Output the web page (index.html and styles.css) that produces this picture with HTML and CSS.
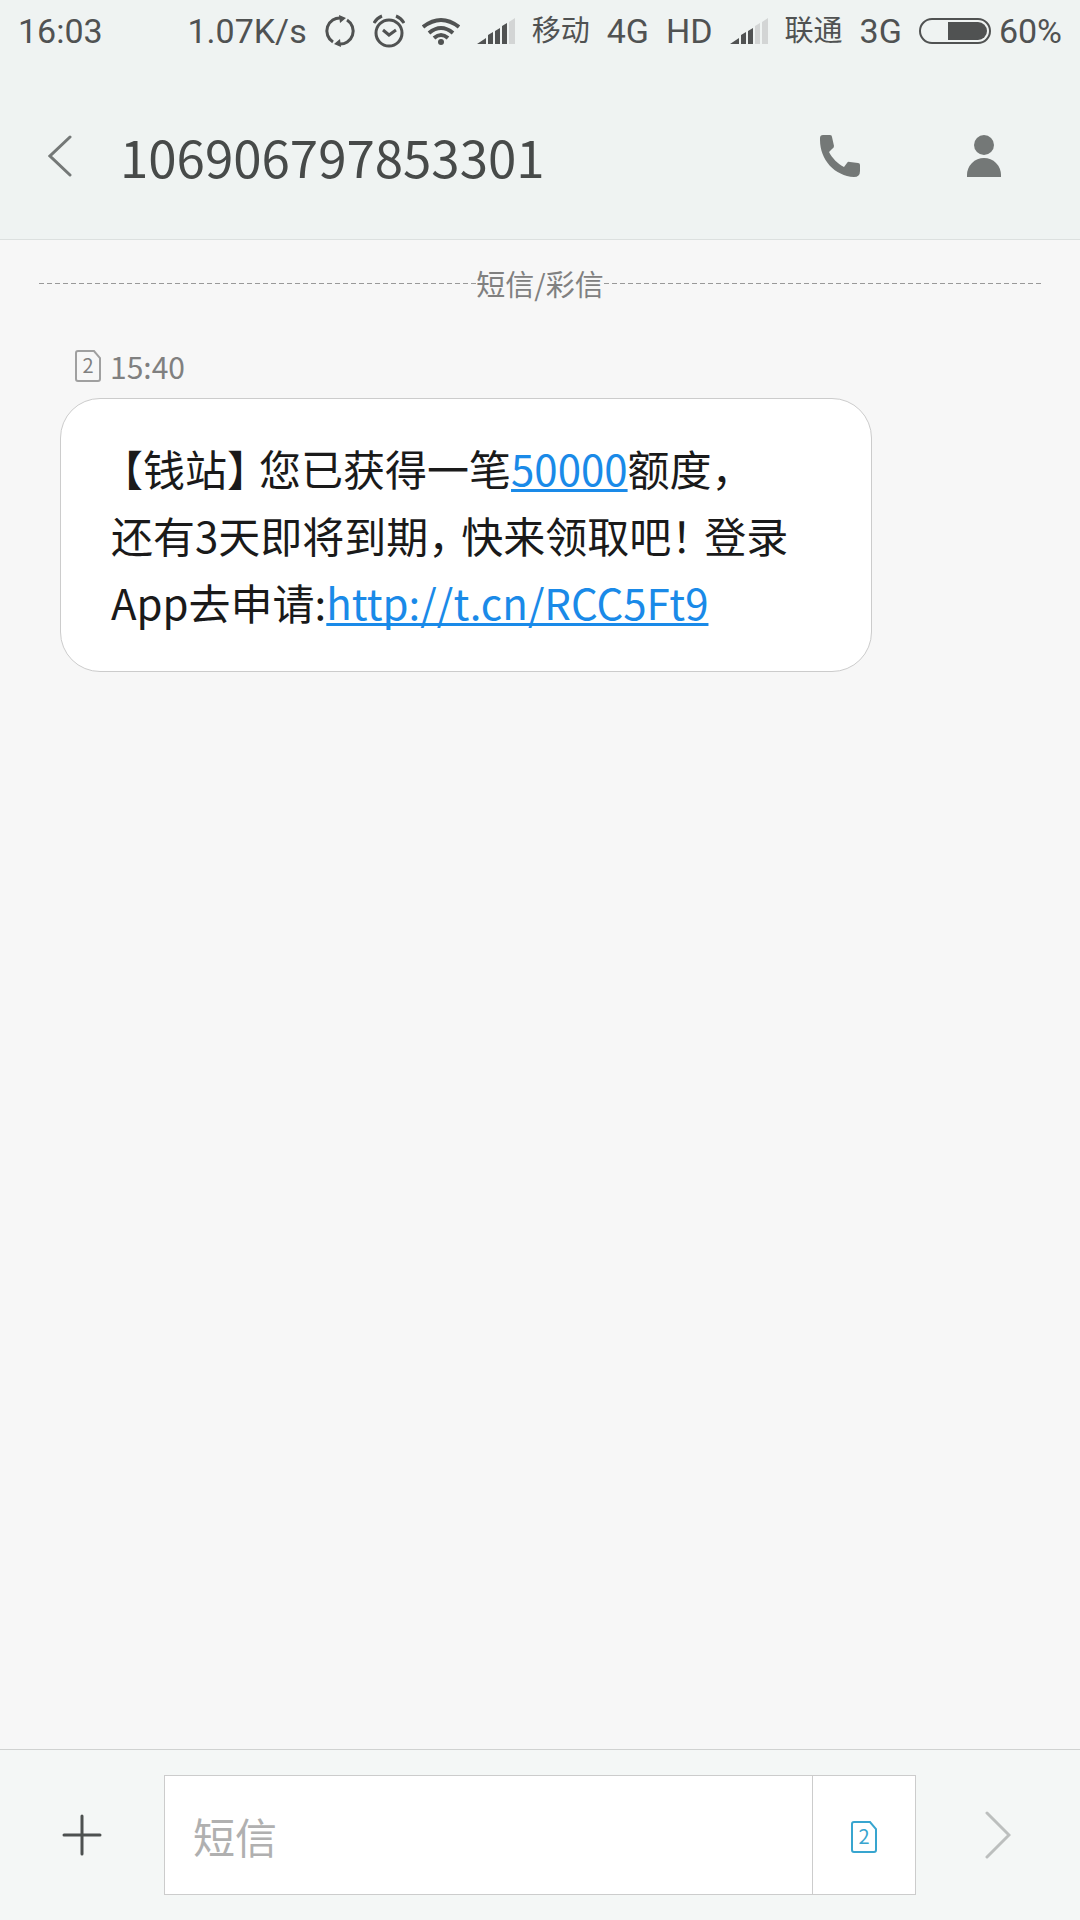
FILE: index.html
```html
<!DOCTYPE html>
<html lang="zh-CN">
<head>
  <meta charset="UTF-8">
  <meta name="viewport" content="width=device-width, initial-scale=1">
  <title>106906797853301</title>
  <link rel="stylesheet" href="styles.css">
</head>
<body>
  <div class="status-bar">
    <span class="clock">16:03</span>
    <span>1.07K/s</span>
    <svg width="32" height="32" viewBox="0 0 32 32" fill="none" stroke="#505252" stroke-width="3">
      <path d="M9 27A13 13 0 0 1 17 3"/>
      <path d="M23 5A13 13 0 0 1 15 29"/>
      <path d="M15 0l7 3-6 5zM17 32l-7-3 6-5z" fill="#505252" stroke="none"/>
    </svg>
    <svg width="32" height="34" viewBox="0 0 32 34" fill="none" stroke="#505252" stroke-width="3">
      <circle cx="16" cy="19" r="13"/>
      <path d="M1 9Q4 4 9 2M31 9Q28 4 23 2"/>
      <path d="M10 16l6 5 7-5"/>
    </svg>
    <svg width="38" height="28" viewBox="0 0 38 28" fill="none" stroke="#505252" stroke-width="4">
      <path d="M1 10Q19-4 37 10"/>
      <path d="M7 16Q19 6 31 16"/>
      <path d="M12 21Q19 15 26 21"/>
      <circle cx="19" cy="25" r="3" fill="#505252" stroke="none"/>
    </svg>
    <svg width="38" height="26" viewBox="0 0 38 26" fill="#505252">
      <path d="M0 26l9-6v6zM11 26v-9l5-3v12zM18 26V13l5-3v16zM25 26V8l5-3v21z"/>
      <path d="M32 26V4l6-4v26z" fill="#d3d5d5"/>
    </svg>
    <span class="carrier">移动</span>
    <span>4G</span>
    <span>HD</span>
    <svg width="38" height="26" viewBox="0 0 38 26" fill="#505252">
      <path d="M0 26l9-6v6zM11 26v-9l5-3v12zM18 26V13l5-3v16z"/>
      <path d="M25 26V8l5-3v21zM32 26V4l6-4v26z" fill="#d3d5d5"/>
    </svg>
    <span class="carrier">联通</span>
    <span>3G</span>
    <span class="battery">
      <svg width="72" height="26" viewBox="0 0 72 26">
        <rect x="1" y="1" width="70" height="24" rx="12" fill="none" stroke="#505252" stroke-width="2"/>
        <path d="M29 4h30a9 9 0 0 1 0 18H29z" fill="#505252"/>
      </svg>
      60%
    </span>
  </div>

  <header class="header">
    <button class="icon-button back" aria-label="返回">
      <svg width="24" height="42" viewBox="0 0 24 42" fill="none" stroke="#747877" stroke-width="3" stroke-linecap="round">
        <path d="M22 2L2 21l20 19"/>
      </svg>
    </button>
    <h1 class="number">106906797853301</h1>
    <button class="icon-button" aria-label="拨打电话">
      <svg width="40" height="42" viewBox="0 0 40 42" fill="#747877">
        <path d="M3 0H10Q12 0 12 2L14 11Q14 13 12 14L9 17C12 23 18 29 24 32L27 28Q28 26 30 27L38 28Q40 28 40 30V36Q40 42 34 42C15 41 0 25 0 5V3Q0 0 3 0Z"/>
      </svg>
    </button>
    <button class="icon-button" aria-label="联系人">
      <svg width="34" height="42" viewBox="0 0 34 42" fill="#747877">
        <circle cx="17" cy="10" r="10"/>
        <path d="M0 42v-2a17 17 0 0 1 34 0v2z"/>
      </svg>
    </button>
  </header>

  <main class="thread">
    <div class="divider">短信/彩信</div>
    <div class="meta">
      <svg class="sim" width="26" height="32" viewBox="0 0 26 32">
        <path d="M3 1H19L25 8V29Q25 31 23 31H3Q1 31 1 29V3Q1 1 3 1Z"/>
        <text x="13" y="23">2</text>
      </svg>
      <time>15:40</time>
    </div>
    <p class="bubble">
      <span class="sender">【钱站】</span>您已获得一笔<a href="#">50000</a>额度，<br>
      还有3天即将到期<span class="mark">，</span>快来领取吧<span class="mark">！</span>登录<br>
      App去申请:<a href="#">http://t.cn/RCC5Ft9</a>
    </p>
  </main>

  <form class="composer">
    <button type="button" class="icon-button" aria-label="添加">
      <svg width="40" height="42" viewBox="0 0 40 42" fill="none" stroke="#4d5150" stroke-width="3" stroke-linecap="round">
        <path d="M2 21h36M20 2v38"/>
      </svg>
    </button>
    <div class="field">
      <input type="text" placeholder="短信" aria-label="短信">
      <button type="button" class="icon-button sim-button" aria-label="卡2">
        <svg class="sim" width="26" height="32" viewBox="0 0 26 32">
          <path d="M3 1H19L25 8V29Q25 31 23 31H3Q1 31 1 29V3Q1 1 3 1Z"/>
          <text x="13" y="23">2</text>
        </svg>
      </button>
    </div>
    <button type="button" class="icon-button send" aria-label="发送">
      <svg width="26" height="48" viewBox="0 0 26 48" fill="none" stroke="#bcbfbe" stroke-width="3" stroke-linecap="round">
        <path d="M2 2l22 22L2 46"/>
      </svg>
    </button>
  </form>
</body>
</html>
```
FILE: styles.css
```css
* {
  box-sizing: border-box;
}
body {
  margin: 0;
  min-height: 100vh;
  display: flex;
  flex-direction: column;
  background-color: #f7f7f7;
  font-family: "Noto Sans CJK SC", sans-serif;
}
svg {
  display: block;
  flex: none;
}

/* status bar */
.status-bar {
  display: flex;
  align-items: center;
  gap: 17px;
  height: 62px;
  padding: 0 18px;
  background-color: #eff3f2;
  color: #505252;
  font-family: Roboto, "Noto Sans CJK SC", sans-serif;
  font-size: 34px;
  white-space: nowrap;
}
.clock {
  margin-right: auto;
}
.carrier {
  font-size: 29px;
  line-height: 40px;
}
.battery {
  display: flex;
  align-items: center;
  gap: 8px;
}

/* header */
.header {
  display: flex;
  align-items: center;
  height: 178px;
  padding: 10px 24px 0 0;
  background-color: #eff3f2;
  border-bottom: 1px solid #dce0df;
}
.icon-button {
  display: flex;
  align-items: center;
  justify-content: center;
  width: 144px;
  height: 120px;
  padding: 0;
  border: 0;
  background: none;
  font-family: inherit;
  cursor: pointer;
}
.back {
  width: 120px;
}
.number {
  flex: 1;
  margin: 0;
  color: #474a49;
  font-size: 51px;
  font-weight: 400;
}

/* thread */
.thread {
  flex: 1;
  padding: 19px 39px;
}
.divider {
  display: flex;
  align-items: center;
  color: #808080;
  font-size: 29px;
  line-height: 48px;
}
.divider::before,
.divider::after {
  content: "";
  flex: 1;
  height: 1px;
  background: repeating-linear-gradient(90deg, #999 0 5px, transparent 5px 8px);
}
.meta {
  display: flex;
  align-items: center;
  gap: 9px;
  margin: 36px 0 9px 36px;
  color: #808080;
  font-size: 30px;
  line-height: 46px;
}
.sim path {
  fill: none;
  stroke: #a0a0a0;
  stroke-width: 2;
}
.sim text {
  fill: #808080;
  font-size: 20px;
  text-anchor: middle;
}
.bubble {
  width: fit-content;
  min-width: 812px;
  margin: 0 21px;
  padding: 35px 50px 36px;
  background-color: #fff;
  border: 1px solid #ccc;
  border-radius: 40px;
  color: #1a1a1a;
  font-size: 42px;
  line-height: 67px;
}
.bubble a {
  color: #1a8ae8;
  text-decoration-thickness: 3px;
  text-underline-offset: 3px;
  text-decoration-skip-ink: none;
}
.sender {
  margin: 0 -10px;
}
/* half-width punctuation with some air after it */
.mark {
  margin-right: 12px;
  font-feature-settings: "halt";
}

/* composer */
.composer {
  display: grid;
  grid-template-columns: 164px 1fr 164px;
  align-items: center;
  height: 171px;
  background-color: #f4f7f6;
  border-top: 1px solid #d0d2d1;
}
.composer .icon-button {
  width: 100%;
}
.field {
  display: flex;
  height: 120px;
  background-color: #fff;
  border: 1px solid #ccc;
}
.field input {
  flex: 1;
  min-width: 0;
  padding: 0 28px;
  border: 0;
  outline: none;
  background: none;
  font: 42px "Noto Sans CJK SC", sans-serif;
}
.field input::placeholder {
  color: #b0b0b0;
}
.composer .sim-button {
  width: 103px;
  height: 100%;
  padding-top: 4px;
  border-left: 1px solid #ccc;
}
.sim-button path {
  stroke: #38a5cf;
}
.sim-button text {
  fill: #38a5cf;
}
```
